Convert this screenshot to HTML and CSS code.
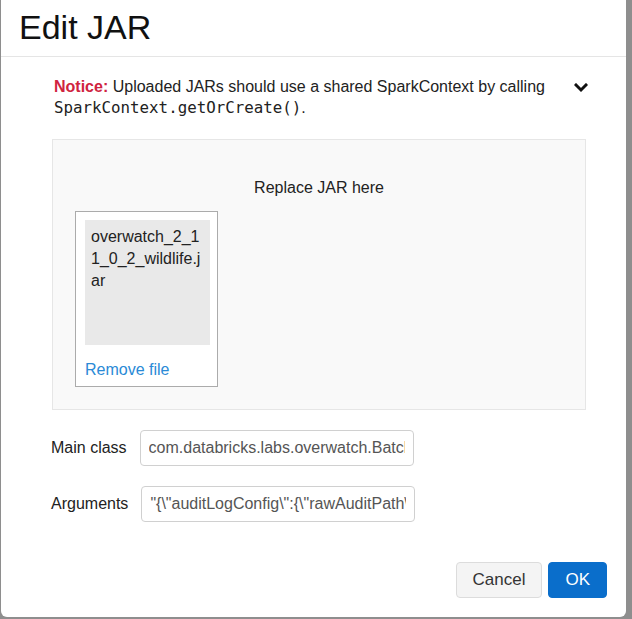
FILE: index.html
```
<!DOCTYPE html>
<html>
<head>
<meta charset="utf-8">
<link rel="stylesheet" href="styles.css">
</head>
<body>
<div class="modal">
  <div class="modal-header">
    <h1 class="modal-title">Edit JAR</h1>
  </div>
  <div class="modal-body">
    <div class="notice">
      <p class="notice-text"><strong class="notice-label">Notice:</strong> Uploaded JARs should use a shared SparkContext by calling <code class="code">SparkContext.getOrCreate()</code>.</p>
      <svg class="chevron" width="14" height="10" viewBox="0 0 14 10"><path d="M2 2 L7 7 L12 2" fill="none" stroke="#111" stroke-width="3" stroke-linecap="square"/></svg>
    </div>
    <div class="dropzone">
      <div class="dropzone-title">Replace JAR here</div>
      <div class="preview">
        <div class="thumb">overwatch_2_11_0_2_wildlife.jar</div>
        <a class="remove-link">Remove file</a>
      </div>
    </div>
    <div class="form-row">
      <label class="form-label">Main class</label>
      <input class="form-input" type="text" value="com.databricks.labs.overwatch.BatchRunner">
    </div>
    <div class="form-row">
      <label class="form-label">Arguments</label>
      <input class="form-input" type="text" value="&quot;{\&quot;auditLogConfig\&quot;:{\&quot;rawAuditPath\&quot;:\&quot;dbfs:/mnt/logs\&quot;}}&quot;">
    </div>
  </div>
  <div class="modal-footer">
    <button class="btn btn-default">Cancel</button>
    <button class="btn btn-primary">OK</button>
  </div>
</div>
</body>
</html>
```
FILE: styles.css
```
html, body {
  margin: 0;
  padding: 0;
}
body {
  background: #8e8e8e;
  font-family: "Liberation Sans", Arial, sans-serif;
  font-size: 16px;
  color: #222;
  height: 619px;
  overflow: hidden;
}
.modal {
  margin-left: 1px;
  width: 625px;
  height: 617px;
  background: #fff;
  border-radius: 0 0 6px 6px;
  box-sizing: border-box;
  display: flex;
  flex-direction: column;
}
.modal-header {
  padding: 7px 18px 9px;
  border-bottom: 1px solid #e5e5e5;
}
.modal-title {
  margin: 0;
  font-size: 34px;
  line-height: 40px;
  font-weight: normal;
  color: #111;
}
.modal-body {
  padding: 19px 38px 0 43px;
}
.notice {
  display: flex;
  align-items: flex-start;
  gap: 8px;
  padding-left: 10px;
}
.notice-text {
  flex: 1;
  margin: 0;
  line-height: 21px;
  color: #222;
}
.notice-label {
  color: #d0243f;
  font-weight: bold;
}
.code {
  font-family: "DejaVu Sans Mono", monospace;
  font-size: 15.8px;
  color: #222;
}
.chevron {
  margin-top: 7px;
  flex: none;
}
.dropzone {
  margin: 21px 2px 0 8px;
  background: #f9f9f9;
  border: 1px solid #e6e6e6;
  padding: 37px 22px 22px;
}
.dropzone-title {
  text-align: center;
  line-height: 22px;
  color: #222;
}
.preview {
  margin-top: 12px;
  border: 1px solid #ababab;
  background: #fff;
  padding: 8px 7px 5px 9px;
  box-sizing: content-box;
  width: 125px;
}
.thumb {
  width: 125px;
  height: 125px;
  box-sizing: border-box;
  background: #e9e9e9;
  padding: 6px 4px 6px 6px;
  line-height: 22px;
  word-break: break-all;
  color: #222;
}
.remove-link {
  display: block;
  margin-top: 14px;
  line-height: 22px;
  color: #2a8ad6;
  cursor: pointer;
}
.form-row {
  display: flex;
  align-items: center;
  margin: 20px 0 0 7px;
}
.form-label {
  margin-right: 13px;
  color: #222;
}
.form-input {
  width: 274px;
  height: 36px;
  box-sizing: border-box;
  border: 1px solid #d0d0d0;
  border-radius: 4px;
  padding: 0 8px;
  font-family: "Liberation Sans", Arial, sans-serif;
  font-size: 16px;
  color: #555;
  background: #fff;
}
.modal-footer {
  margin-top: auto;
  display: flex;
  justify-content: flex-end;
  gap: 6px;
  padding: 0 19px 19px;
}
.btn {
  height: 36px;
  border-radius: 4px;
  font-family: "Liberation Sans", Arial, sans-serif;
  font-size: 17px;
  padding: 0 16px;
  cursor: pointer;
}
.btn-default {
  background: #f4f4f4;
  border: 1px solid #dcdcdc;
  color: #333;
}
.btn-primary {
  background: #0a6ecb;
  border: 1px solid #0a6ecb;
  color: #fff;
}
```
